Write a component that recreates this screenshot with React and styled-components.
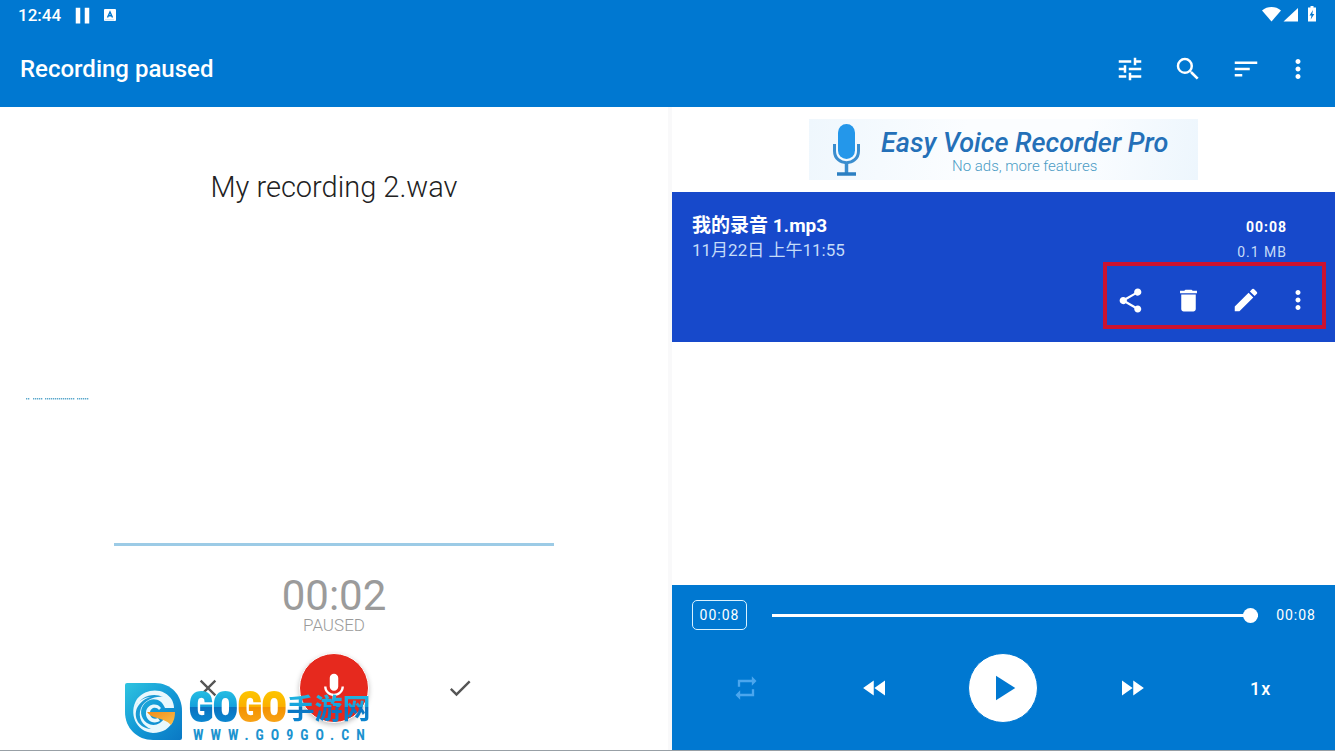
import React from 'react'
import styled, { createGlobalStyle, css } from 'styled-components'
import {
  MdCheck,
  MdClose,
  MdDelete,
  MdEdit,
  MdFastForward,
  MdFastRewind,
  MdMic,
  MdMoreVert,
  MdPause,
  MdPlayArrow,
  MdRepeat,
  MdSearch,
  MdShare,
  MdSort,
  MdTune,
} from 'react-icons/md'

const blue = '#0078d1'
const deepBlue = '#1749cb'

const GlobalStyle = createGlobalStyle`
  * {
    box-sizing: border-box;
  }
  body {
    margin: 0;
    background: #fff;
    font-family: Roboto, "Noto Sans CJK SC", sans-serif;
  }
  button {
    padding: 0;
    border: 0;
    background: none;
    color: inherit;
    font: inherit;
    cursor: pointer;
  }
`

const Page = styled.div`
  display: flex;
  flex-direction: column;
  min-height: 100vh;
  border-bottom: 1px solid #98a0a6;
`

const Header = styled.header`
  background: ${blue};
  color: #fff;
`
const StatusBar = styled.div`
  display: flex;
  justify-content: space-between;
  align-items: center;
  height: 30px;
  padding: 0 17px 0 18px;
`
const StatusGroup = styled.div`
  display: flex;
  align-items: center;
  gap: 8px;
`
const Clock = styled.time`
  font-size: 17px;
  font-weight: 500;
  line-height: 30px;
`
const AppBar = styled.div`
  display: flex;
  justify-content: space-between;
  align-items: center;
  height: 77px;
  padding: 0 14px 0 20px;
`
const Title = styled.h1`
  margin: 0;
  font-size: 24px;
  font-weight: 500;
`
const Toolbar = styled.nav`
  display: flex;
`
const IconButton = styled.button`
  display: flex;
  justify-content: center;
  align-items: center;
  width: ${(p) => p.$width || 58}px;
  height: 48px;
  color: ${(p) => p.$color || '#fff'};
`

const Main = styled.main`
  flex: 1;
  display: grid;
  grid-template-columns: 672fr 663fr;
`
const RecordPanel = styled.section`
  position: relative;
  display: flex;
  flex-direction: column;
  align-items: center;
  padding: 61px 0 27px;
  border-right: 4px solid #f9f9fa;
  color: #9b9b9b;
`
const FileName = styled.h2`
  margin: 0;
  color: #222;
  font-size: 29px;
  font-weight: 300;
  line-height: 38px;
`
const Wave = styled.div`
  flex: 1;
  align-self: stretch;
  display: flex;
  align-items: center;
  padding: 48px 26px 0;
`
const Level = styled.div`
  width: 66%;
  height: 3px;
  margin-bottom: 30px;
  background: #9ccbe6;
`
const Elapsed = styled.time`
  font-size: 42px;
  font-weight: 400;
  line-height: 40px;
`
const State = styled.span`
  margin-bottom: 19px;
  font-size: 17px;
  font-weight: 300;
  line-height: 18px;
`
const RecordControls = styled.div`
  display: flex;
  justify-content: center;
  align-items: center;
  gap: 62px;
`
const RecordButton = styled.button`
  display: flex;
  justify-content: center;
  align-items: center;
  width: 70px;
  height: 70px;
  border: 1px solid #fff;
  border-radius: 50%;
  background: #e6291e;
  color: #fff;
  box-shadow: 0 2px 5px rgba(0, 0, 0, 0.25);
`

const Watermark = styled.a`
  position: absolute;
  bottom: 9px;
  left: 125px;
  display: flex;
  align-items: flex-end;
  gap: 6px;
  text-decoration: none;
`
const Brand = styled.span`
  display: flex;
  flex-direction: column;
`
const BrandName = styled.span`
  display: flex;
  align-items: center;
  height: 44px;
`
const gradients = {
  blue: 'linear-gradient(#25bce2 15%, #14a0dc 50%, #0a72c0 51%, #0b8ad2 90%)',
  orange: 'linear-gradient(#fdc400 15%, #fbb000 50%, #f39200 51%, #f9a51a 90%)',
}
const BrandText = styled.span`
  background: ${(p) => gradients[p.$tone]};
  background-clip: text;
  -webkit-background-clip: text;
  color: transparent;
  line-height: 44px;
  ${(p) =>
    p.$cjk
      ? css`
          font-family: "Noto Sans CJK SC", sans-serif;
          font-size: 28px;
          font-weight: 700;
        `
      : css`
          font-family: "Roboto Condensed", "Liberation Sans Narrow", "Liberation Sans", sans-serif;
          font-size: 41px;
          font-weight: 700;
          -webkit-text-stroke: 2px transparent;
        `}
`
const BrandUrl = styled.span`
  padding-left: 4px;
  color: #1c93cf;
  font-family: "Roboto Condensed", "Liberation Sans Narrow", "Liberation Sans", sans-serif;
  font-size: 14px;
  font-weight: 700;
  letter-spacing: 7px;
  line-height: 12px;
`

const LibraryPanel = styled.section`
  display: flex;
  flex-direction: column;
`
const BannerArea = styled.div`
  display: flex;
  justify-content: center;
  padding: 12px 0;
`
const Banner = styled.a`
  display: flex;
  align-items: center;
  gap: 20px;
  width: 389px;
  height: 61px;
  padding-left: 23px;
  background: linear-gradient(100deg, #eff7fd, #fbfdff 40%, #fbfdff 70%, #edf6fd);
  text-decoration: none;
`
const BannerText = styled.span`
  display: flex;
  flex-direction: column;
  align-items: center;
  padding-top: 2px;
`
const BannerTitle = styled.span`
  color: #2470b8;
  font-size: 27px;
  font-style: italic;
  font-weight: 500;
  line-height: 30px;
`
const BannerSub = styled.span`
  color: #4a9bc4;
  font-size: 15px;
  font-weight: 300;
  line-height: 16px;
`

const Recording = styled.article`
  display: flex;
  flex-direction: column;
  height: 150px;
  padding: 21px 9px 13px 20px;
  background: ${deepBlue};
  color: #fff;
`
const RecordingInfo = styled.div`
  flex: 1;
  min-height: 0;
  display: flex;
  justify-content: space-between;
  padding-right: 39px;
`
const Lines = styled.div`
  display: flex;
  flex-direction: column;
  padding-top: ${(p) => (p.$end ? 2 : 0)}px;
  text-align: ${(p) => (p.$end ? 'right' : 'left')};
  letter-spacing: ${(p) => (p.$end ? '1px' : 'normal')};
`
const Primary = styled.span`
  font-size: ${(p) => (p.$small ? 14 : 19)}px;
  font-weight: 700;
  line-height: 25px;
`
const Secondary = styled.span`
  color: #c5dcf8;
  font-size: ${(p) => (p.$small ? 14 : 17)}px;
  line-height: 25px;
`
const Actions = styled.div`
  align-self: flex-end;
  flex-shrink: 0;
  display: flex;
  align-items: center;
  gap: 12px;
  height: 67px;
  padding: 9px 7px 0 0;
  border: 4px solid #cb1230;
`
const Empty = styled.div`
  flex: 1;
`

const Player = styled.div`
  padding: 15px 0 27px;
  background: ${blue};
  color: #fff;
`
const Timeline = styled.div`
  display: flex;
  align-items: center;
  height: 30px;
  margin-bottom: 23px;
  padding: 0 19px 0 20px;
  font-size: 14px;
  letter-spacing: 1px;
`
const TimeChip = styled.button`
  width: 55px;
  height: 30px;
  margin-right: 25px;
  border: 1px solid #d9f2ff;
  border-radius: 5px;
  letter-spacing: 1px;
`
const Slider = styled.input`
  flex: 1;
  min-width: 0;
  height: 16px;
  margin: 0 18px 0 0;
  appearance: none;
  background: linear-gradient(#fff, #fff) center / 100% 3px no-repeat;

  &::-webkit-slider-thumb {
    width: 15px;
    height: 15px;
    appearance: none;
    border-radius: 50%;
    background: #fff;
  }
`
const PlayerControls = styled.div`
  display: grid;
  grid-template-columns: repeat(5, 1fr);
  place-items: center;
  padding: 0 10px;
`
const PlayButton = styled.button`
  display: flex;
  justify-content: center;
  align-items: center;
  width: 70px;
  height: 70px;
  border: 1px solid ${blue};
  border-radius: 50%;
  background: #fff;
  color: ${blue};
`
const Speed = styled.button`
  height: 48px;
  font-size: 18px;
  font-weight: 500;
  letter-spacing: 1px;
`

const InputMethodIcon = () => (
  <svg width="12" height="12" viewBox="0 0 12 12" aria-hidden="true">
    <rect width="12" height="12" rx="1" fill="#fff" />
    <path d="M3.5 8.5 6 3l2.5 5.5M4.4 6.8h3.2" fill="none" stroke={blue} strokeWidth="1.4" />
    <path d="M1 10.8h9" stroke="#8cc4ec" strokeWidth="0.6" />
  </svg>
)

const SignalIcons = () => (
  <svg width="56" height="18" viewBox="0 0 56 18" aria-hidden="true" fill="#fff">
    <path d="M0 4.4C5.4-.1 13.6-.1 19 4.4L9.5 15.5z" />
    <path d="M36 2v13.5H21.5z" />
    <path d="M48.5 0h3v1.5h2.5v14h-8v-14h2.5z" />
    <path d="M51 4 47.5 9.5h2l-.8 4 3.6-5.5h-2z" fill={blue} />
  </svg>
)

const bars = [0, 2, 7, 9, 11, 13, 15, 19, 21, 23, 25, 27, 29, 31, 33, 35, 37, 39, 41, 43, 45, 47, 51, 53, 55, 57, 59, 61]
const WaveForm = () => (
  <svg width="63" height="3" viewBox="0 0 63 3" role="img" aria-label="Waveform">
    {bars.map((x) => (
      <rect key={x} x={x} y="1" width="1.3" height="1.5" fill="#5ba8cc" />
    ))}
  </svg>
)

const BannerMic = () => (
  <svg width="29" height="54" viewBox="0 0 29 54" aria-hidden="true">
    <rect x="6" y="1" width="17" height="35" rx="8.5" fill="#2497ea" />
    <path d="M2.5 21v7c0 15.5 24 15.5 24 0v-7" fill="none" stroke="#3a8dce" strokeWidth="3" />
    <path d="M14.5 39v11" stroke="#3a8dce" strokeWidth="3.5" />
    <path d="M5 51h19" stroke="#2b7fc2" strokeWidth="3.5" />
  </svg>
)

const GoLogo = () => (
  <svg width="58" height="58" viewBox="0 0 58 58" aria-hidden="true">
    <defs>
      <linearGradient id="leaf" x1="0" y1="0" x2="1" y2="1">
        <stop offset="0" stopColor="#2fc4e0" />
        <stop offset="0.5" stopColor="#1399d6" />
        <stop offset="1" stopColor="#0a78c4" />
      </linearGradient>
      <linearGradient id="tongue" x1="0" y1="0" x2="1" y2="1">
        <stop offset="0" stopColor="#f08c1a" />
        <stop offset="1" stopColor="#fbc04a" />
      </linearGradient>
    </defs>
    <path d="M2 0h28c16 0 27 12 27 28v27q0 2-2 2H28C12 57 0 45 0 29V2q0-2 2-2z" fill="url(#leaf)" />
    <path d="M47 17C40 5 22 4 12 16C3 30 11 49 28 50C38 50 45 45 48 38L40 34C36 42 28 44 22 40C15 35 14 26 20 20C27 13 37 16 40 25H49C49 22 48 19 47 17z" fill="#e9f8fd" />
    <path d="M9 25C16 13 28 9 38 14C29 13 20 17 16 25C12 35 18 43 26 46C14 45 8 35 12 25C16 18 21 15 26 14C19 14 13 18 9 25z" fill="#1a9ad4" />
    <path d="M36 25c-4-6-14-4-15 4-1 8 7 13 14 9l-2-3c-5 2-8-1-8-5 0-5 6-7 9-3z" fill="#e9f8fd" />
    <path d="M22 29h28c0 5-1 9-4 13-4-4-9-6-14-7-5-1-8-3-10-6z" fill="url(#tongue)" />
  </svg>
)

const App = () => (
  <Page>
    <GlobalStyle />
    <Header>
      <StatusBar>
        <StatusGroup>
          <Clock>12:44</Clock>
          <MdPause size={27} />
          <InputMethodIcon />
        </StatusGroup>
        <SignalIcons />
      </StatusBar>
      <AppBar>
        <Title>Recording paused</Title>
        <Toolbar aria-label="Toolbar">
          <IconButton aria-label="Tune"><MdTune size={30} /></IconButton>
          <IconButton aria-label="Search"><MdSearch size={30} /></IconButton>
          <IconButton aria-label="Sort"><MdSort size={30} /></IconButton>
          <IconButton aria-label="More" $width={46}><MdMoreVert size={30} /></IconButton>
        </Toolbar>
      </AppBar>
    </Header>
    <Main>
      <RecordPanel>
        <FileName>My recording 2.wav</FileName>
        <Wave><WaveForm /></Wave>
        <Level />
        <Elapsed>00:02</Elapsed>
        <State>PAUSED</State>
        <RecordControls>
          <IconButton aria-label="Discard" $color="#555"><MdClose size={28} /></IconButton>
          <RecordButton aria-label="Resume recording"><MdMic size={34} /></RecordButton>
          <IconButton aria-label="Save" $color="#555"><MdCheck size={28} /></IconButton>
        </RecordControls>
        <Watermark href="#">
          <GoLogo />
          <Brand>
            <BrandName>
              <BrandText $tone="blue">GO</BrandText>
              <BrandText $tone="orange">GO</BrandText>
              <BrandText $tone="blue" $cjk>手游网</BrandText>
            </BrandName>
            <BrandUrl>WWW.GO9GO.CN</BrandUrl>
          </Brand>
        </Watermark>
      </RecordPanel>
      <LibraryPanel>
        <BannerArea>
          <Banner href="#">
            <BannerMic />
            <BannerText>
              <BannerTitle>Easy Voice Recorder Pro</BannerTitle>
              <BannerSub>No ads, more features</BannerSub>
            </BannerText>
          </Banner>
        </BannerArea>
        <Recording>
          <RecordingInfo>
            <Lines>
              <Primary>我的录音 1.mp3</Primary>
              <Secondary>11月22日 上午11:55</Secondary>
            </Lines>
            <Lines $end>
              <Primary $small>00:08</Primary>
              <Secondary $small>0.1 MB</Secondary>
            </Lines>
          </RecordingInfo>
          <Actions>
            <IconButton aria-label="Share" $width={46}><MdShare size={29} /></IconButton>
            <IconButton aria-label="Delete" $width={46}><MdDelete size={29} /></IconButton>
            <IconButton aria-label="Rename" $width={46}><MdEdit size={30} /></IconButton>
            <IconButton aria-label="More" $width={34}><MdMoreVert size={30} /></IconButton>
          </Actions>
        </Recording>
        <Empty />
        <Player>
          <Timeline>
            <TimeChip>00:08</TimeChip>
            <Slider type="range" min="0" max="8" defaultValue="8" aria-label="Position" />
            <span>00:08</span>
          </Timeline>
          <PlayerControls>
            <IconButton aria-label="Repeat" $color="#4ba6ee"><MdRepeat size={28} /></IconButton>
            <IconButton aria-label="Rewind"><MdFastRewind size={30} /></IconButton>
            <PlayButton aria-label="Play"><MdPlayArrow size={42} /></PlayButton>
            <IconButton aria-label="Forward"><MdFastForward size={30} /></IconButton>
            <Speed>1x</Speed>
          </PlayerControls>
        </Player>
      </LibraryPanel>
    </Main>
  </Page>
)

export default App
